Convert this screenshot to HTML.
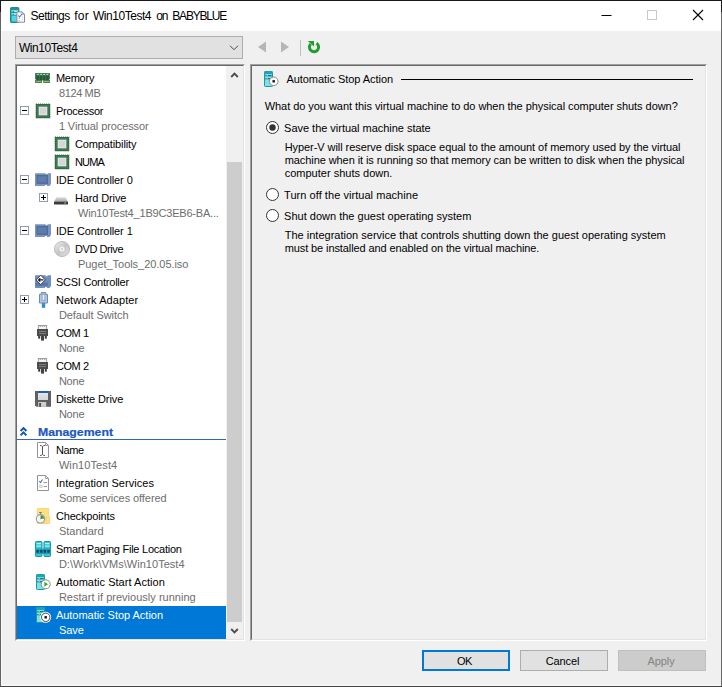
<!DOCTYPE html>
<html><head><meta charset="utf-8"><title>Settings for Win10Test4 on BABYBLUE</title>
<style>
html,body{margin:0;padding:0;}
body{width:722px;height:687px;position:relative;overflow:hidden;background:#f0f0f0;font-family:"Liberation Sans", sans-serif;font-size:11px;line-height:13px;}
.a{position:absolute;}
.t{position:absolute;white-space:pre;height:13px;}
.xb{position:absolute;width:7px;height:7px;border:1px solid #919eb6;background:#fff;}
.xb .h{position:absolute;left:1px;top:3px;width:5px;height:1px;background:#000;}
.xb .v{position:absolute;left:3px;top:1px;width:1px;height:5px;background:#000;}
svg{position:absolute;overflow:visible;}
</style></head><body>
<!-- window frame -->
<div class="a" style="left:0;top:0;width:722px;height:31px;background:#fff"></div>
<div class="a" style="left:0;top:0;width:722px;height:1px;background:#1a1a1a"></div>
<div class="a" style="left:0;top:0;width:1px;height:687px;background:#646464"></div>
<div class="a" style="left:0;top:0;width:1px;height:12px;background:#1a1a1a"></div>
<div class="a" style="left:1px;top:31px;width:1px;height:655px;background:#f8f8f8"></div>
<div class="a" style="left:721px;top:0;width:1px;height:687px;background:#6a6a6a"></div>
<div class="a" style="left:721px;top:0;width:1px;height:12px;background:#1a1a1a"></div>
<div class="a" style="left:1px;top:685px;width:720px;height:1px;background:#fafafa"></div>
<div class="a" style="left:0;top:686px;width:722px;height:1px;background:#444"></div>
<!-- caption buttons -->
<svg style="left:600px;top:8px" width="120" height="16" viewBox="0 0 120 16">
<path d="M1.5 7.5h10" stroke="#000" stroke-width="1" fill="none"/>
<rect x="47.5" y="2.5" width="9" height="9" stroke="#c8c8c8" stroke-width="1" fill="none"/>
<path d="M93 2l10 10M103 2l-10 10" stroke="#000" stroke-width="1.1" fill="none"/>
</svg>
<!-- combo -->
<div class="a" style="left:15px;top:36px;width:226px;height:21px;border:1px solid #adadad;background:#e1e1e1"></div>
<svg style="left:229px;top:45px" width="10" height="6" viewBox="0 0 10 6"><path d="M1 0.7l4 4 4-4" stroke="#484848" stroke-width="1" fill="none"/></svg>
<!-- nav arrows -->
<svg style="left:256px;top:36px" width="70" height="24" viewBox="0 0 70 24">
<path d="M10 5.500v11l-8-5.500z" fill="#b6b6b6"/>
<path d="M25 5.500v11l8-5.500z" fill="#b6b6b6"/>
<path d="M44.500 4v16" stroke="#c0c0c0" stroke-width="1"/>
<g transform="translate(46,0)"><path d="M14.500 7.300A4.600 4.600 0 1 1 8.700 8" stroke="#1f9e2f" stroke-width="3" fill="none"/><path d="M5.800 5h6.200v5.600z" fill="#1f9e2f"/></g>
</svg>
<!-- tree panel -->
<div class="a" style="left:15px;top:64px;width:228px;height:575px;border:1px solid;border-color:#a0a0a0 #fff #fff #a0a0a0;background:#fff"></div>
<div class="a" style="left:16px;top:65px;width:226px;height:573px;border:1px solid;border-color:#696969 #e3e3e3 #e3e3e3 #696969;background:#fff"></div>
<!-- selection -->
<div class="a" style="left:17px;top:606px;width:209px;height:33px;background:#0078d7"></div>
<!-- management underline -->
<div class="a" style="left:17px;top:439px;width:209px;height:1px;background:#2f6aa8"></div>
<svg style="left:20px;top:427px" width="7" height="9" viewBox="0 0 7 9"><path d="M0.600 4l2.900-2.900 2.900 2.900M0.600 8.300l2.900-2.900 2.900 2.900" stroke="#0c52ba" stroke-width="1.900" fill="none"/></svg>
<!-- scrollbar -->
<div class="a" style="left:226px;top:66px;width:17px;height:573px;background:#f0f0f0"></div>
<div class="a" style="left:227px;top:162px;width:15px;height:460px;background:#cdcdcd"></div>
<svg style="left:230px;top:72px" width="9" height="6" viewBox="0 0 9 6"><path d="M1.200 5l3.300-3.300 3.300 3.300" stroke="#4c4c4c" stroke-width="1.900" fill="none"/></svg>
<svg style="left:230px;top:628px" width="9" height="6" viewBox="0 0 9 6"><path d="M1.200 1l3.300 3.300 3.300-3.300" stroke="#4c4c4c" stroke-width="1.900" fill="none"/></svg>
<!-- right panel -->
<div class="a" style="left:250px;top:64px;width:455px;height:575px;border:1px solid;border-color:#a0a0a0 #fff #fff #a0a0a0"></div>
<div class="a" style="left:251px;top:65px;width:453px;height:573px;border:1px solid;border-color:#696969 #e3e3e3 #e3e3e3 #696969"></div>
<div class="a" style="left:401px;top:79px;width:292px;height:1px;background:#000"></div>
<!-- radios -->
<svg style="left:266px;top:121px" width="14" height="14" viewBox="0 0 14 14"><circle cx="6.5" cy="6.5" r="6" fill="#fff" stroke="#333" stroke-width="1"/><circle cx="6.5" cy="6.5" r="3.2" fill="#333"/></svg>
<svg style="left:266px;top:188px" width="14" height="14" viewBox="0 0 14 14"><circle cx="6.5" cy="6.5" r="6" fill="#fff" stroke="#333" stroke-width="1"/></svg>
<svg style="left:266px;top:209px" width="14" height="14" viewBox="0 0 14 14"><circle cx="6.5" cy="6.5" r="6" fill="#fff" stroke="#333" stroke-width="1"/></svg>
<!-- buttons -->
<div class="a" style="left:422px;top:650px;width:84px;height:17px;border:2px solid #0078d7;background:#e1e1e1"></div>
<div class="a" style="left:520px;top:650px;width:86px;height:19px;border:1px solid #adadad;background:#e1e1e1"></div>
<div class="a" style="left:618px;top:650px;width:86px;height:19px;border:1px solid #bfbfbf;background:#cccccc"></div>
<div class="xb" style="left:20px;top:106px"><i class="h"></i></div><div class="xb" style="left:20px;top:175px"><i class="h"></i></div><div class="xb" style="left:39px;top:193px"><i class="h"></i><i class="v"></i></div><div class="xb" style="left:20px;top:226px"><i class="h"></i></div><div class="xb" style="left:20px;top:295px"><i class="h"></i><i class="v"></i></div>
<svg style="left:10px;top:7px" width="16" height="17" viewBox="0 0 16 17"><rect x="0.700" y="0.700" width="8" height="14.600" rx="1" fill="#1d95a0" stroke="#1a8f9a" stroke-width="1.400"/><rect x="1.600" y="8.600" width="6.200" height="5.900" fill="#52d6e2"/><rect x="1.500" y="3.300" width="6.500" height="1.600" fill="#bdf3f7"/><rect x="1.500" y="6.100" width="6.500" height="1.600" fill="#bdf3f7"/><rect x="2.600" y="3.900" width="1.200" height="1" fill="#0e6a75"/><rect x="2.600" y="6.700" width="1.200" height="1" fill="#0e6a75"/><path d="M6.900 4.900h5.200l2.400 2.400v7.900h-7.600z" fill="#fff" stroke="#8a8a8a" stroke-width="1"/><path d="M12.100 4.900v2.400h2.400" fill="none" stroke="#8a8a8a" stroke-width="0.800"/><path d="M8.300 8.500l1.300 1.500 2.300-3" stroke="#3d78c8" stroke-width="1.100" fill="none"/><path d="M8.600 11.500h1.500M8.600 13.500h1.500M12 10h1M12 12.800h1" stroke="#b0b8c8" stroke-width="0.900"/></svg>
<svg style="left:35px;top:73px" width="15" height="10" viewBox="0 0 15 10"><rect x="0" y="0" width="15" height="10" fill="#44875a"/><rect x="2.2" y="1" width="1.600" height="1" fill="#b4dcbd"/><rect x="1.2" y="2.500" width="2.700" height="4.700" fill="#28573a"/><rect x="5.3" y="1" width="1.600" height="1" fill="#b4dcbd"/><rect x="4.5" y="2.500" width="2.700" height="4.700" fill="#28573a"/><rect x="8.4" y="1" width="1.600" height="1" fill="#b4dcbd"/><rect x="7.8" y="2.500" width="2.700" height="4.700" fill="#28573a"/><rect x="11.5" y="1" width="1.600" height="1" fill="#b4dcbd"/><rect x="11.1" y="2.500" width="2.700" height="4.700" fill="#28573a"/><rect x="1" y="8" width="5" height="0.900" fill="#b3b36c"/><rect x="9.200" y="8" width="5" height="0.900" fill="#b3b36c"/><rect x="7" y="7.500" width="1.200" height="2.500" fill="#fff"/><rect x="0" y="6" width="0.600" height="1" fill="#fff"/><rect x="14.400" y="6" width="0.600" height="1" fill="#fff"/></svg>
<svg style="left:35px;top:103px" width="16" height="16" viewBox="0 0 16 16"><rect x="0.900" y="0.900" width="14.200" height="14.200" fill="none" stroke="#66703f" stroke-width="0.900" stroke-dasharray="1 1"/><rect x="1" y="1" width="14" height="14" fill="#2f6b47"/><rect x="2" y="2" width="12" height="12" fill="#3d7b57"/><rect x="3.700" y="3.700" width="8.600" height="8.600" fill="#e4e8e5"/><rect x="4.700" y="4.700" width="6.600" height="6.600" fill="#d6d6d6"/></svg>
<svg style="left:54px;top:136px" width="16" height="16" viewBox="0 0 16 16"><rect x="0.900" y="0.900" width="14.200" height="14.200" fill="none" stroke="#66703f" stroke-width="0.900" stroke-dasharray="1 1"/><rect x="1" y="1" width="14" height="14" fill="#2f6b47"/><rect x="2" y="2" width="12" height="12" fill="#3d7b57"/><rect x="3.700" y="3.700" width="8.600" height="8.600" fill="#e4e8e5"/><rect x="4.700" y="4.700" width="6.600" height="6.600" fill="#d6d6d6"/></svg>
<svg style="left:54px;top:154px" width="16" height="16" viewBox="0 0 16 16"><rect x="0.900" y="0.900" width="14.200" height="14.200" fill="none" stroke="#66703f" stroke-width="0.900" stroke-dasharray="1 1"/><rect x="1" y="1" width="14" height="14" fill="#2f6b47"/><rect x="2" y="2" width="12" height="12" fill="#3d7b57"/><rect x="3.700" y="3.700" width="8.600" height="8.600" fill="#e4e8e5"/><rect x="4.700" y="4.700" width="6.600" height="6.600" fill="#d6d6d6"/></svg>
<svg style="left:35px;top:173px" width="16" height="13" viewBox="0 0 16 13"><path d="M0 0.300h10.700v1h1.800v-1h3.500v10.700l-1.500 2h-2.600v-1h-2v1h-9.900z" fill="#7a94bf"/><rect x="2" y="2.300" width="10.600" height="8" fill="#5674a2" stroke="#4a6694" stroke-width="0.800"/><rect x="3.200" y="3.500" width="8.200" height="5.600" fill="#5f7dab"/></svg>
<svg style="left:35px;top:224px" width="16" height="13" viewBox="0 0 16 13"><path d="M0 0.300h10.700v1h1.800v-1h3.500v10.700l-1.500 2h-2.600v-1h-2v1h-9.900z" fill="#7a94bf"/><rect x="2" y="2.300" width="10.600" height="8" fill="#5674a2" stroke="#4a6694" stroke-width="0.800"/><rect x="3.200" y="3.500" width="8.200" height="5.600" fill="#5f7dab"/></svg>
<svg style="left:54px;top:196.5px" width="14" height="9" viewBox="0 0 14 9"><defs><linearGradient id="hg" x1="0" y1="0" x2="0" y2="1"><stop offset="0" stop-color="#dcdcdc"/><stop offset="1" stop-color="#a8a8a8"/></linearGradient></defs><path d="M2.500 0.300h9l2.300 4.300h-13.600z" fill="url(#hg)"/><rect x="0" y="4.400" width="14" height="3.200" rx="0.600" fill="#3c3c3c"/><rect x="10.300" y="5.400" width="1.600" height="1.200" fill="#5fe05f"/></svg>
<svg style="left:54px;top:241px" width="16" height="16" viewBox="0 0 16 16"><defs><linearGradient id="dg" x1="0" y1="0" x2="1" y2="1"><stop offset="0" stop-color="#f2f2f2"/><stop offset="0.5" stop-color="#c4c4c4"/><stop offset="1" stop-color="#e6e6e6"/></linearGradient></defs><circle cx="8" cy="8" r="7.6" fill="url(#dg)" stroke="#b0b0b0" stroke-width="0.8"/><circle cx="8" cy="8" r="2.7" fill="#f4f4f4" stroke="#d8d8d8" stroke-width="0.6"/><circle cx="8" cy="8" r="1" fill="#c8c8c8"/></svg>
<svg style="left:35px;top:275px" width="16" height="13" viewBox="0 0 16 13"><path d="M0 0.300h10.700v1h1.800v-1h3.500v10.700l-1.500 2h-2.600v-1h-2v1h-9.900z" fill="#6f8fc0"/><rect x="0.800" y="7.500" width="12" height="3.500" fill="#5878aa"/><path d="M5.700 0.200l4.700 4.700-4.700 4.700-4.700-4.700z" fill="#fff" stroke="#2c3a55" stroke-width="1"/><path d="M3.500 4.900h5M5.300 3.100l-1.900 1.800 1.900 1.800" stroke="#1a1a1a" stroke-width="1.100" fill="none"/></svg>
<svg style="left:38.5px;top:292px" width="9" height="16" viewBox="0 0 9 16"><rect x="2.800" y="10.500" width="3.400" height="5.300" fill="#2b8fd6"/><path d="M0.500 2.300h1.800v-1.800h4.400v1.800h1.800v8.700h-8z" fill="#b4c6e0" stroke="#7189b0" stroke-width="1"/><rect x="3.100" y="2.300" width="2.800" height="6" fill="#e8eff8" stroke="#8399bd" stroke-width="0.800"/></svg>
<svg style="left:37px;top:325px" width="11" height="16" viewBox="0 0 11 16"><rect x="1.300" y="0.400" width="8.400" height="4" fill="#f4f4f4" stroke="#8c8c8c" stroke-width="0.800"/><path d="M2.500 0.800l0.800 1 0.800-1M4.700 0.800l0.800 1 0.800-1M6.900 0.800l0.800 1 0.800-1" stroke="#8c8c8c" stroke-width="0.700" fill="none"/><rect x="0" y="4" width="11" height="7" fill="#4c4c4c"/><rect x="2" y="6" width="7" height="0.800" fill="#8a8a8a"/><rect x="2" y="8" width="7" height="0.800" fill="#8a8a8a"/><rect x="1.200" y="11" width="2" height="2.700" fill="#3c3c3c"/><rect x="7.800" y="11" width="2" height="2.700" fill="#3c3c3c"/><rect x="4" y="11" width="3" height="4.600" fill="#444"/></svg>
<svg style="left:37px;top:358px" width="11" height="16" viewBox="0 0 11 16"><rect x="1.300" y="0.400" width="8.400" height="4" fill="#f4f4f4" stroke="#8c8c8c" stroke-width="0.800"/><path d="M2.500 0.800l0.800 1 0.800-1M4.700 0.800l0.800 1 0.800-1M6.900 0.800l0.800 1 0.800-1" stroke="#8c8c8c" stroke-width="0.700" fill="none"/><rect x="0" y="4" width="11" height="7" fill="#4c4c4c"/><rect x="2" y="6" width="7" height="0.800" fill="#8a8a8a"/><rect x="2" y="8" width="7" height="0.800" fill="#8a8a8a"/><rect x="1.200" y="11" width="2" height="2.700" fill="#3c3c3c"/><rect x="7.800" y="11" width="2" height="2.700" fill="#3c3c3c"/><rect x="4" y="11" width="3" height="4.600" fill="#444"/></svg>
<svg style="left:35px;top:391px" width="16" height="16" viewBox="0 0 16 16"><defs><linearGradient id="fg" x1="0" y1="0" x2="0" y2="1"><stop offset="0" stop-color="#dfeaf6"/><stop offset="1" stop-color="#d6d6d6"/></linearGradient></defs><path d="M0 0h16v15.800h-14.500l-1.500-1.500z" fill="#606060"/><rect x="3" y="0" width="10" height="9" fill="url(#fg)"/><rect x="3" y="0" width="10" height="2" fill="#1f63a6"/><rect x="3.200" y="11" width="8" height="4.800" fill="#cfcfcf"/><rect x="4.200" y="12" width="1.800" height="3.800" fill="#4a4a4a"/></svg>
<svg style="left:37px;top:442px" width="12" height="16" viewBox="0 0 12 16"><path d="M0.500 0.500h8l3 3v12h-11z" fill="#fff" stroke="#939393" stroke-width="1"/><path d="M8.500 0.500v3h3" fill="none" stroke="#8a8a8a" stroke-width="0.800"/><path d="M3 3.500q1.700 0 2.500 1 0.800-1 2.500-1M3 13.500q1.700 0 2.500-1 0.800 1 2.500 1M5.500 4.500v8" stroke="#555" stroke-width="1" fill="none"/></svg>
<svg style="left:37px;top:475px" width="12" height="16" viewBox="0 0 12 16"><path d="M0.500 0.500h8l3 3v12h-11z" fill="#fff" stroke="#939393" stroke-width="1"/><path d="M8.500 0.500v3h3" fill="none" stroke="#8a8a8a" stroke-width="0.800"/><path d="M2.300 6l1.200 1.500 2-3" stroke="#2f7fd0" stroke-width="1.100" fill="none"/><path d="M6.500 7.500h3.500M6.500 11.500h3.500" stroke="#9a9a9a" stroke-width="1"/><rect x="2.800" y="10.300" width="2.200" height="2.200" fill="none" stroke="#b8b8b8" stroke-width="0.700"/></svg>
<svg style="left:35px;top:508px" width="16" height="16" viewBox="0 0 16 16"><path d="M2.300 0.500h11.400v8h1v7h-12.400z" fill="#ffe083" stroke="#f0cf6a" stroke-width="0.800"/><path d="M11.500 8.500v7" stroke="#f3d36e" stroke-width="0.800"/><path d="M5.500 4.500v1.500M4 4.500h3" stroke="#7a7a7a" stroke-width="0.900"/><circle cx="5.500" cy="10.800" r="4.200" fill="#f6f6f6" stroke="#9a9a9a" stroke-width="1.100"/><path d="M5.500 10.800v-3.600a3.600 3.600 0 0 1 3.600 3.600z" fill="#2ea84e"/><path d="M5.500 10.800l2-1.500" stroke="#c03030" stroke-width="0.800"/></svg>
<svg style="left:35px;top:541px" width="16" height="16" viewBox="0 0 16 16"><rect x="0.5" y="0.500" width="6.500" height="15" rx="0.800" fill="#39c6d2" stroke="#1297a3" stroke-width="1"/><rect x="1.5" y="2" width="4.500" height="1.200" fill="#b5f0f5"/><rect x="1.5" y="4.500" width="4.500" height="1.200" fill="#b5f0f5"/><rect x="9" y="0.500" width="6.500" height="15" rx="0.800" fill="#39c6d2" stroke="#1297a3" stroke-width="1"/><rect x="10" y="2" width="4.500" height="1.200" fill="#b5f0f5"/><rect x="10" y="4.500" width="4.500" height="1.200" fill="#b5f0f5"/><rect x="0" y="7.500" width="16" height="5.500" fill="#1aa0b8"/><rect x="1.5" y="9" width="2.400" height="2.600" fill="#0b3f66"/><rect x="5.1" y="9" width="2.400" height="2.600" fill="#0b3f66"/><rect x="8.7" y="9" width="2.400" height="2.600" fill="#0b3f66"/><rect x="12.3" y="9" width="2.400" height="2.600" fill="#0b3f66"/></svg>
<svg style="left:36px;top:574px" width="16" height="17" viewBox="0 0 16 17"><rect x="0.500" y="0.500" width="8" height="15" rx="0.800" fill="#7fe0ea" stroke="#1a98a4" stroke-width="1"/><rect x="0.500" y="0.500" width="8" height="2.600" fill="#22a3b0"/><rect x="1.300" y="4" width="6.400" height="1.400" fill="#0e7d8a"/><rect x="1.300" y="7" width="6.400" height="1.400" fill="#0e7d8a"/><rect x="2.600" y="4.200" width="1" height="1" fill="#fff"/><rect x="2.600" y="7.200" width="1" height="1" fill="#fff"/><circle cx="9.700" cy="10.300" r="4.500" fill="#fff" stroke="#8c8c8c" stroke-width="1"/><path d="M8.300 7.800v5l3.800-2.500z" fill="#2fae2f"/></svg>
<svg style="left:36px;top:607px" width="16" height="17" viewBox="0 0 16 17"><rect x="0.500" y="0.500" width="8" height="15" rx="0.800" fill="#7fe0ea" stroke="#1a98a4" stroke-width="1"/><rect x="0.500" y="0.500" width="8" height="2.600" fill="#22a3b0"/><rect x="1.300" y="4" width="6.400" height="1.400" fill="#0e7d8a"/><rect x="1.300" y="7" width="6.400" height="1.400" fill="#0e7d8a"/><rect x="2.600" y="4.200" width="1" height="1" fill="#fff"/><rect x="2.600" y="7.200" width="1" height="1" fill="#fff"/><circle cx="9.700" cy="10.300" r="5.500" fill="#fff"/><circle cx="9.700" cy="10.300" r="4.200" fill="#fff" stroke="#4a4a4a" stroke-width="1"/><rect x="8.500" y="9.100" width="2.400" height="2.400" fill="#111"/></svg>
<svg style="left:263.5px;top:70.5px" width="16" height="17" viewBox="0 0 16 17"><rect x="0.500" y="0.500" width="8" height="15" rx="0.800" fill="#7fe0ea" stroke="#1a98a4" stroke-width="1"/><rect x="0.500" y="0.500" width="8" height="2.600" fill="#22a3b0"/><rect x="1.300" y="4" width="6.400" height="1.400" fill="#0e7d8a"/><rect x="1.300" y="7" width="6.400" height="1.400" fill="#0e7d8a"/><rect x="2.600" y="4.200" width="1" height="1" fill="#fff"/><rect x="2.600" y="7.200" width="1" height="1" fill="#fff"/><circle cx="9.700" cy="10.300" r="4.300" fill="#fff" stroke="#8a8a8a" stroke-width="1"/><rect x="8.500" y="9.100" width="2.400" height="2.400" fill="#111"/></svg>
<div class="t" style="left:30.6px;top:8.5px;color:#000;letter-spacing:-0.545px;font-size:12px;line-height:14px;">Settings</div><div class="t" style="left:74.3px;top:8.5px;color:#000;letter-spacing:0.161px;font-size:12px;line-height:14px;">for</div><div class="t" style="left:92.9px;top:8.5px;color:#000;letter-spacing:-0.45px;font-size:12px;line-height:14px;">Win10Test4</div><div class="t" style="left:156.3px;top:8.5px;color:#000;letter-spacing:-1.18px;font-size:12px;line-height:14px;">on</div><div class="t" style="left:172.3px;top:8.5px;color:#000;letter-spacing:-1.197px;font-size:12px;line-height:14px;">BABYBLUE</div><div class="t" style="left:18.9px;top:40.5px;color:#000;letter-spacing:-0.42px;font-size:12px;line-height:14px;">Win10Test4</div><div class="t" style="left:55.9px;top:72.0px;color:#000;letter-spacing:-0.239px;">Memory</div><div class="t" style="left:58.9px;top:87.0px;color:#6d6d6d;letter-spacing:-0.362px;">8124 MB</div><div class="t" style="left:55.9px;top:105.0px;color:#000;letter-spacing:-0.248px;">Processor</div><div class="t" style="left:58.9px;top:120.0px;color:#6d6d6d;letter-spacing:-0.096px;">1 Virtual processor</div><div class="t" style="left:75.0px;top:138.0px;color:#000;letter-spacing:-0.121px;">Compatibility</div><div class="t" style="left:75.0px;top:156.0px;color:#000;letter-spacing:-0.823px;">NUMA</div><div class="t" style="left:55.9px;top:174.0px;color:#000;letter-spacing:-0.092px;">IDE Controller 0</div><div class="t" style="left:75.0px;top:192.0px;color:#000;letter-spacing:-0.128px;">Hard Drive</div><div class="t" style="left:78.0px;top:207.0px;color:#6d6d6d;letter-spacing:-0.193px;">Win10Test4_1B9C3EB6-BA...</div><div class="t" style="left:55.9px;top:225.0px;color:#000;letter-spacing:-0.092px;">IDE Controller 1</div><div class="t" style="left:75.0px;top:243.0px;color:#000;letter-spacing:-0.428px;">DVD Drive</div><div class="t" style="left:78.0px;top:258.0px;color:#6d6d6d;letter-spacing:-0.043px;">Puget_Tools_20.05.iso</div><div class="t" style="left:55.9px;top:276.0px;color:#000;letter-spacing:-0.228px;">SCSI Controller</div><div class="t" style="left:55.9px;top:294.0px;color:#000;letter-spacing:0.065px;">Network Adapter</div><div class="t" style="left:58.9px;top:309.0px;color:#6d6d6d;letter-spacing:-0.051px;">Default Switch</div><div class="t" style="left:55.9px;top:327.0px;color:#000;letter-spacing:-0.389px;">COM 1</div><div class="t" style="left:58.9px;top:342.0px;color:#6d6d6d;letter-spacing:-0.224px;">None</div><div class="t" style="left:55.9px;top:360.0px;color:#000;letter-spacing:-0.389px;">COM 2</div><div class="t" style="left:58.9px;top:375.0px;color:#6d6d6d;letter-spacing:-0.224px;">None</div><div class="t" style="left:55.9px;top:393.0px;color:#000;letter-spacing:-0.076px;">Diskette Drive</div><div class="t" style="left:58.9px;top:408.0px;color:#6d6d6d;letter-spacing:-0.224px;">None</div><div class="t" style="left:55.9px;top:444.0px;color:#000;letter-spacing:-0.336px;">Name</div><div class="t" style="left:58.9px;top:459.0px;color:#6d6d6d;letter-spacing:0.092px;">Win10Test4</div><div class="t" style="left:55.9px;top:477.0px;color:#000;letter-spacing:0.044px;">Integration Services</div><div class="t" style="left:58.9px;top:492.0px;color:#6d6d6d;letter-spacing:-0.074px;">Some services offered</div><div class="t" style="left:55.9px;top:510.0px;color:#000;letter-spacing:-0.15px;">Checkpoints</div><div class="t" style="left:58.9px;top:525.0px;color:#6d6d6d;letter-spacing:0.005px;">Standard</div><div class="t" style="left:55.9px;top:543.0px;color:#000;letter-spacing:-0.241px;">Smart Paging File Location</div><div class="t" style="left:58.9px;top:558.0px;color:#6d6d6d;letter-spacing:0.027px;">D:\Work\VMs\Win10Test4</div><div class="t" style="left:55.9px;top:576.0px;color:#000;letter-spacing:0.031px;">Automatic Start Action</div><div class="t" style="left:58.9px;top:591.0px;color:#6d6d6d;letter-spacing:0.016px;">Restart if previously running</div><div class="t" style="left:55.9px;top:609.0px;color:#fff;letter-spacing:-0.025px;">Automatic Stop Action</div><div class="t" style="left:58.9px;top:624.0px;color:#fff;letter-spacing:-0.02px;">Save</div><div class="t" style="left:37.9px;top:426.0px;color:#1b58bf;font-weight:bold;transform-origin:0 0;transform:scaleX(1.1152);-webkit-text-stroke:0.2px #1b58bf;">Management</div><div class="t" style="left:286.4px;top:73.0px;color:#000;letter-spacing:-0.044px;">Automatic Stop Action</div><div class="t" style="left:264.7px;top:100.0px;color:#000;letter-spacing:-0.048px;">What do you want this virtual machine to do when the physical computer shuts down?</div><div class="t" style="left:284.1px;top:122.0px;color:#000;letter-spacing:-0.025px;">Save the virtual machine state</div><div class="t" style="left:284.7px;top:141.0px;color:#000;letter-spacing:-0.065px;">Hyper-V will reserve disk space equal to the amount of memory used by the virtual</div><div class="t" style="left:284.7px;top:154.0px;color:#000;letter-spacing:-0.077px;">machine when it is running so that memory can be written to disk when the physical</div><div class="t" style="left:284.7px;top:167.0px;color:#000;letter-spacing:0.004px;">computer shuts down.</div><div class="t" style="left:284.1px;top:189.0px;color:#000;letter-spacing:0.047px;">Turn off the virtual machine</div><div class="t" style="left:284.1px;top:210.0px;color:#000;letter-spacing:0.005px;">Shut down the guest operating system</div><div class="t" style="left:284.7px;top:229.0px;color:#000;letter-spacing:0.009px;">The integration service that controls shutting down the guest operating system</div><div class="t" style="left:284.7px;top:242.0px;color:#000;letter-spacing:-0.1px;">must be installed and enabled on the virtual machine.</div><div class="t" style="left:457.1px;top:655.0px;color:#000;letter-spacing:-0.553px;">OK</div><div class="t" style="left:545.7px;top:655.0px;color:#000;letter-spacing:-0.108px;">Cancel</div><div class="t" style="left:647.5px;top:655.0px;color:#838383;letter-spacing:-0.066px;">Apply</div>
</body></html>
